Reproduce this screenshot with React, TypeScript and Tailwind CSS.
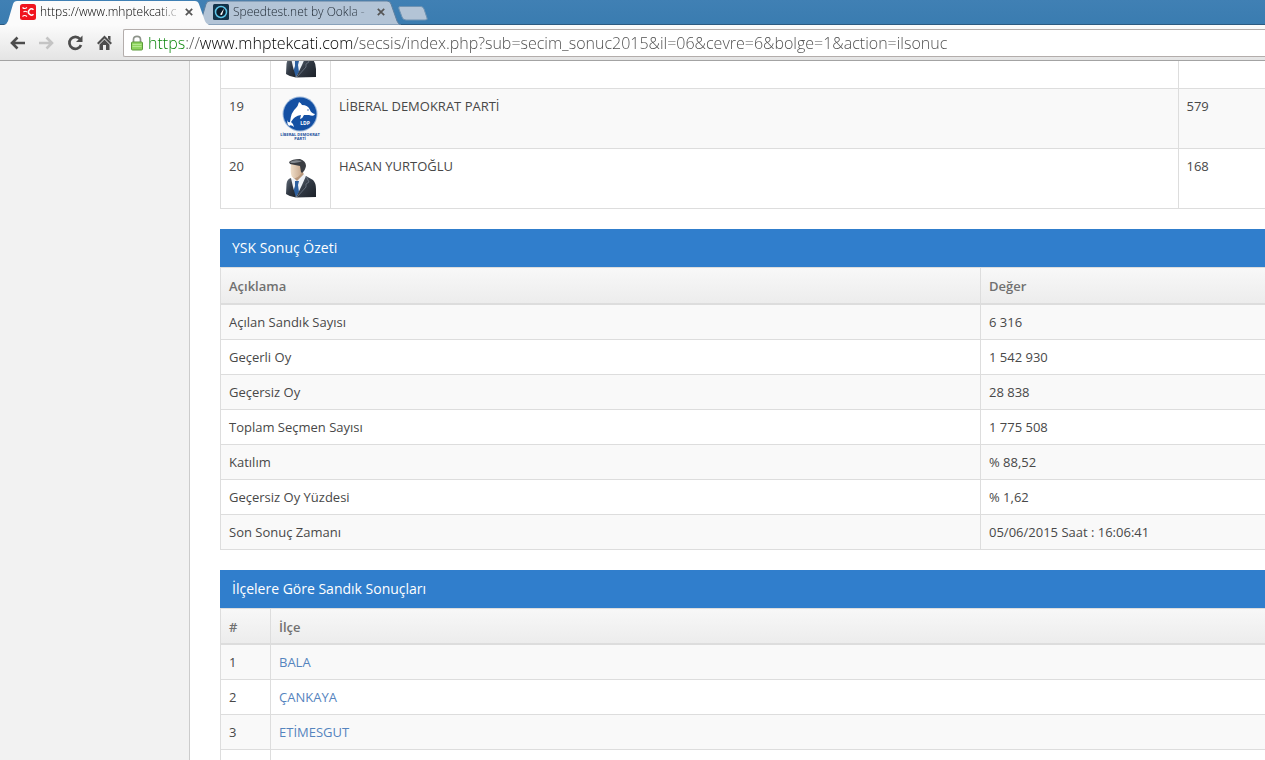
import type { ReactNode } from "react";
import { clsx } from "clsx";

const parties = [
  { no: "", name: "", votes: "", logo: "person" },
  { no: "19", name: "LİBERAL DEMOKRAT PARTİ", votes: "579", logo: "ldp" },
  { no: "20", name: "HASAN YURTOĞLU", votes: "168", logo: "person" },
];

const summary = [
  ["Açılan Sandık Sayısı", "6 316"],
  ["Geçerli Oy", "1 542 930"],
  ["Geçersiz Oy", "28 838"],
  ["Toplam Seçmen Sayısı", "1 775 508"],
  ["Katılım", "% 88,52"],
  ["Geçersiz Oy Yüzdesi", "% 1,62"],
  ["Son Sonuç Zamanı", "05/06/2015 Saat : 16:06:41"],
];

const districts = ["BALA", "ÇANKAYA", "ETİMESGUT", ""];

function PersonIcon() {
  return (
    <svg viewBox="0 0 44 44" className="block size-11" aria-hidden="true">
      <defs>
        <linearGradient id="suit" x1="0" y1="0" x2="1" y2="1">
          <stop offset="0" stopColor="#66707d" />
          <stop offset="0.5" stopColor="#303843" />
          <stop offset="1" stopColor="#1c2128" />
        </linearGradient>
        <linearGradient id="skin" x1="0" y1="0" x2="1" y2="0">
          <stop offset="0" stopColor="#f0dfca" />
          <stop offset="1" stopColor="#c3a184" />
        </linearGradient>
      </defs>
      <path d="M14 19 L24 16 L26 22 L19 29 L15 24 Z" fill="#b8977b" />
      <path d="M12 24 L15 22 L18 25 L25 18 L28 22 L20 37 L15 37 Z" fill="#eef2f7" />
      <path d="M16 25 L20 25 L19 29 L20 36 L17 41 L14 36 L16 30 Z" fill="#2c5f9e" />
      <path d="M12 22 Q8 23 7.500 28 L7 38 Q11 41 17 41.500 L14 31 Z" fill="url(#suit)" />
      <path d="M27 20 L34 24 Q37 27 37 33 L37 41 L17 41.500 L23 29 Z" fill="url(#suit)" />
      <path d="M27 20 L30 26 L27 28 L27 31 L18 41" fill="none" stroke="#6f7986" strokeWidth="0.8" />
      <path d="M12 8 Q11 17 13 21 Q17 24 21 19 L24 15 L23 8 Z" fill="url(#skin)" />
      <path d="M10 6 Q13 3 21 3 Q27 5 27 10 Q26 15 23 17 L22 16 L21 10 L11 8 Z" fill="#3a3d42" />
      <path d="M11 6 Q15 3 23 5 Q19 7 12 7 Z" fill="#83888e" />
    </svg>
  );
}

function LdpLogo() {
  return (
    <svg viewBox="0 0 44 44" className="block size-11 overflow-visible" aria-hidden="true">
      <circle cx="21" cy="18" r="17.500" fill="#9db9dc" />
      <circle cx="21" cy="18" r="16.500" fill="#1450a3" />
      <path
        d="M8 24 Q9 27 11 26 Q12 16 17 12 Q19 10 20 6 Q22 7 23 9 Q29 9 31 14 Q32 17 36 18 Q35 21 30 19 Q27 19 25 19 Q24 22 21 23 L22 19 Q15 20 12 26 Q15 28 15 31 Q12 28 10 30 Q8 28 8 24 Z"
        fill="#fff"
      />
      <circle cx="29" cy="14" r="0.7" fill="#1450a3" />
      <text x="26" y="29" textAnchor="middle" fontSize="5" fontWeight="700" fill="#fff">LDP</text>
      <text x="21" y="40" textAnchor="middle" fontSize="4" fontWeight="700" fill="#1c4f9c">LİBERAL DEMOKRAT</text>
      <text x="21" y="44" textAnchor="middle" fontSize="4" fontWeight="700" fill="#1c4f9c">PARTİ</text>
    </svg>
  );
}

function CloseGlyph() {
  return (
    <svg viewBox="0 0 8 8" className="size-2" aria-hidden="true">
      <path d="M0.800 0.800 L7.200 7.200 M7.200 0.800 L0.800 7.200" stroke="#555" strokeWidth="1.7" />
    </svg>
  );
}

function Tab({ title, icon, active }: { title: string; icon: ReactNode; active?: boolean }) {
  return (
    <div className={clsx("relative flex h-6 items-center pr-3 pl-4", active ? "z-10 w-[205px]" : "-ml-3 w-[204px]")}>
      <svg viewBox="0 0 204 25" preserveAspectRatio="none" className="absolute inset-x-0 top-0 h-[25px] w-full" aria-hidden="true">
        <path
          d="M0 25 Q3 24 4 21 L9 4 Q10 1 13 1 L190 1 Q193 1 194 4 L200 21 Q201 24 204 25 Z"
          fill={active ? "#fbfbfb" : "#b3c4d6"}
          stroke={active ? "none" : "#5d7f9f"}
          strokeWidth="1"
        />
      </svg>
      <button className="relative flex min-w-0 flex-1 items-center gap-1">
        {icon}
        <span
          className={clsx(
            "flex-1 overflow-hidden mask-r-from-85% text-left text-xs leading-4 font-light whitespace-nowrap",
            active ? "text-black" : "text-[#1c2630]"
          )}
        >
          {title}
        </span>
      </button>
      <button aria-label="Kapat" className="relative flex size-4 shrink-0 items-center justify-center">
        <CloseGlyph />
      </button>
    </div>
  );
}

function BrowserChrome() {
  return (
    <header className="shrink-0">
      <div className="flex h-6 bg-linear-to-b from-[#4080b4] to-[#3a7cb0] pl-1">
        <Tab
          active
          title="https://www.mhptekcati.c"
          icon={
            <svg viewBox="0 0 16 16" className="size-4 shrink-0" aria-hidden="true">
              <rect width="16" height="16" rx="2.500" fill="#f0141e" />
              <path d="M2.500 3.500 Q4.500 5.500 7 3.500 M3.500 8 Q5 6.500 7 8 M2.500 12.500 Q4.500 10.500 7 12.500" stroke="#fff" strokeWidth="1.1" fill="none" />
              <path d="M13.500 5.800 A3 3 0 1 0 13.500 10.200" stroke="#fff" strokeWidth="1.5" fill="none" />
            </svg>
          }
        />
        <Tab
          title="Speedtest.net by Ookla -"
          icon={
            <svg viewBox="0 0 16 16" className="size-4 shrink-0" aria-hidden="true">
              <rect width="16" height="16" rx="1.500" fill="#143349" />
              <circle cx="8" cy="8" r="5.500" fill="#0b1c2b" stroke="#5ec6e8" strokeWidth="1.5" />
              <path d="M7 10.500 L11 4.500 L9 11 Z" fill="#fff" />
            </svg>
          }
        />
        <button aria-label="Yeni sekme" className="mt-1.5 -ml-1 h-4 w-8">
          <svg viewBox="0 0 32 16" className="h-4 w-8" aria-hidden="true">
            <path d="M3 0.500 L24 0.500 Q26 0.500 27 3 L30 12 Q31 14 28 14 L9 14 Q6 14 5 11 L2 3 Q1 1 3 0.500 Z" fill="#b3c4d6" stroke="#6f93b3" />
          </svg>
        </button>
      </div>
      <div className="flex h-9 items-center border-t border-[#2c5a80] bg-linear-to-b from-[#fbfbfb] to-[#e4e4e4] pl-2">
        <div className="flex w-[115px] shrink-0 items-center gap-[11px] text-[#4d4d4d]">
          <button aria-label="Geri">
            <svg viewBox="0 0 18 18" className="size-[18px]" aria-hidden="true">
              <path d="M17 9 H4 M9.500 3.500 L4 9 L9.500 14.500" stroke="currentColor" strokeWidth="2.6" fill="none" />
            </svg>
          </button>
          <button aria-label="İleri" disabled className="text-[#c4c4c4]">
            <svg viewBox="0 0 18 18" className="size-[18px]" aria-hidden="true">
              <path d="M2 9 H15 M9.500 3.500 L15 9 L9.500 14.500" stroke="currentColor" strokeWidth="2.6" fill="none" />
            </svg>
          </button>
          <button aria-label="Yenile">
            <svg viewBox="0 0 18 18" className="size-[18px]" aria-hidden="true">
              <path d="M14 5 A6 6 0 1 0 15 11" stroke="currentColor" strokeWidth="2.7" fill="none" />
              <path d="M16.500 1.500 V8 H10 Z" fill="currentColor" />
            </svg>
          </button>
          <button aria-label="Giriş sayfası">
            <svg viewBox="0 0 18 18" className="size-[18px]" aria-hidden="true">
              <path d="M9.500 1.500 L17 9 L15.500 10.500 L9.500 4.500 L3.500 10.500 L2 9 Z M13 2 H15.500 V7 L13 4.500 Z" fill="currentColor" />
              <path d="M4.500 10.500 L9.500 5.500 L14.500 10.500 V16 H11 V11 H8 V16 H4.500 Z" fill="currentColor" />
            </svg>
          </button>
        </div>
        <div className="flex h-7 flex-1 items-center gap-1 rounded-l-xs border border-r-0 border-[#b3adab] bg-white pl-1.5">
          <svg viewBox="0 0 14 16" className="h-4 w-3.5 shrink-0" aria-hidden="true">
            <path d="M3.500 8 V4.500 Q3.500 1.300 7 1.300 Q10.500 1.300 10.500 4.500 V8" stroke="#8d938a" strokeWidth="1.7" fill="none" />
            <rect x="1.500" y="7" width="11" height="8" rx="1" fill="#8fd45f" stroke="#5c9a3c" />
            <path d="M2.500 9.500 H11.500 M2.500 11.500 H11.500" stroke="#b5e892" />
          </svg>
          <input
            aria-label="Adres"
            defaultValue="https://www.mhptekcati.com/secsis/index.php?sub=secim_sonuc2015&il=06&cevre=6&bolge=1&action=ilsonuc"
            className="h-6 min-w-0 flex-1 bg-[linear-gradient(to_right,#008000_0_38px,#4a4a4a_38px_52px,#000_52px_204px,#4a4a4a_204px)] bg-clip-text text-base font-light text-transparent outline-none"
          />
        </div>
      </div>
      <div className="h-px bg-[#a3a3a3]" />
    </header>
  );
}

function Panel({ title, children }: { title: string; children: ReactNode }) {
  return (
    <section className="mt-5">
      <h2 className="bg-[#307ecc] pl-3 text-sm leading-[38px] text-white">{title}</h2>
      {children}
    </section>
  );
}

const table = "w-full table-fixed border-collapse text-left text-[13px] leading-[18px]";
const cell = "border border-r-0 border-[#ddd] p-2";
const headRow = "h-9 bg-linear-to-b from-[#f8f8f8] to-[#ececec] text-[#707070]";
const headCell = "border border-r-0 border-b-2 border-[#ddd] px-2 pt-0.5 font-semibold";

export default function App() {
  return (
    <div className="flex h-screen flex-col overflow-hidden bg-white font-['Open_Sans','Noto_Sans',sans-serif] text-[#484848]">
      <BrowserChrome />
      <div className="flex min-h-0 flex-1">
        <aside className="w-[190px] shrink-0 border-r border-[#ccc] bg-[#f2f2f2]" />
        <main className="flex min-w-0 flex-1 flex-col overflow-hidden pl-[30px]">
          <div className="-mt-[33px]">
            <table className={table}>
              <colgroup>
                <col className="w-[50px]" />
                <col className="w-[60px]" />
                <col />
                <col className="w-[87px]" />
              </colgroup>
              <tbody>
                {parties.map((p, i) => (
                  <tr key={i} className="h-[60px] align-top odd:bg-white even:bg-[#f9f9f9]">
                    <td className={cell}>{p.no}</td>
                    <td className="border border-r-0 border-[#ddd] px-2 pt-[7px]">
                      {p.logo === "ldp" ? <LdpLogo /> : <PersonIcon />}
                    </td>
                    <td className={cell}>{p.name}</td>
                    <td className={cell}>{p.votes}</td>
                  </tr>
                ))}
              </tbody>
            </table>

            <Panel title="YSK Sonuç Özeti">
              <table className={table}>
                <colgroup>
                  <col className="w-[760px]" />
                  <col />
                </colgroup>
                <thead>
                  <tr className={headRow}>
                    <th className={headCell}>Açıklama</th>
                    <th className={headCell}>Değer</th>
                  </tr>
                </thead>
                <tbody>
                  {summary.map(([label, value]) => (
                    <tr key={label} className="odd:bg-[#f9f9f9]">
                      <td className={cell}>{label}</td>
                      <td className={cell}>{value}</td>
                    </tr>
                  ))}
                </tbody>
              </table>
            </Panel>

            <Panel title="İlçelere Göre Sandık Sonuçları">
              <table className={table}>
                <colgroup>
                  <col className="w-[50px]" />
                  <col />
                </colgroup>
                <thead>
                  <tr className={headRow}>
                    <th className={headCell}>#</th>
                    <th className={headCell}>İlçe</th>
                  </tr>
                </thead>
                <tbody>
                  {districts.map((name, i) => (
                    <tr key={i} className="h-[35px] odd:bg-[#f9f9f9]">
                      <td className={cell}>{name && i + 1}</td>
                      <td className={cell}>
                        {name && (
                          <a href="#" className="text-[#5584be] hover:underline">
                            {name}
                          </a>
                        )}
                      </td>
                    </tr>
                  ))}
                </tbody>
              </table>
            </Panel>
          </div>
        </main>
      </div>
    </div>
  );
}
